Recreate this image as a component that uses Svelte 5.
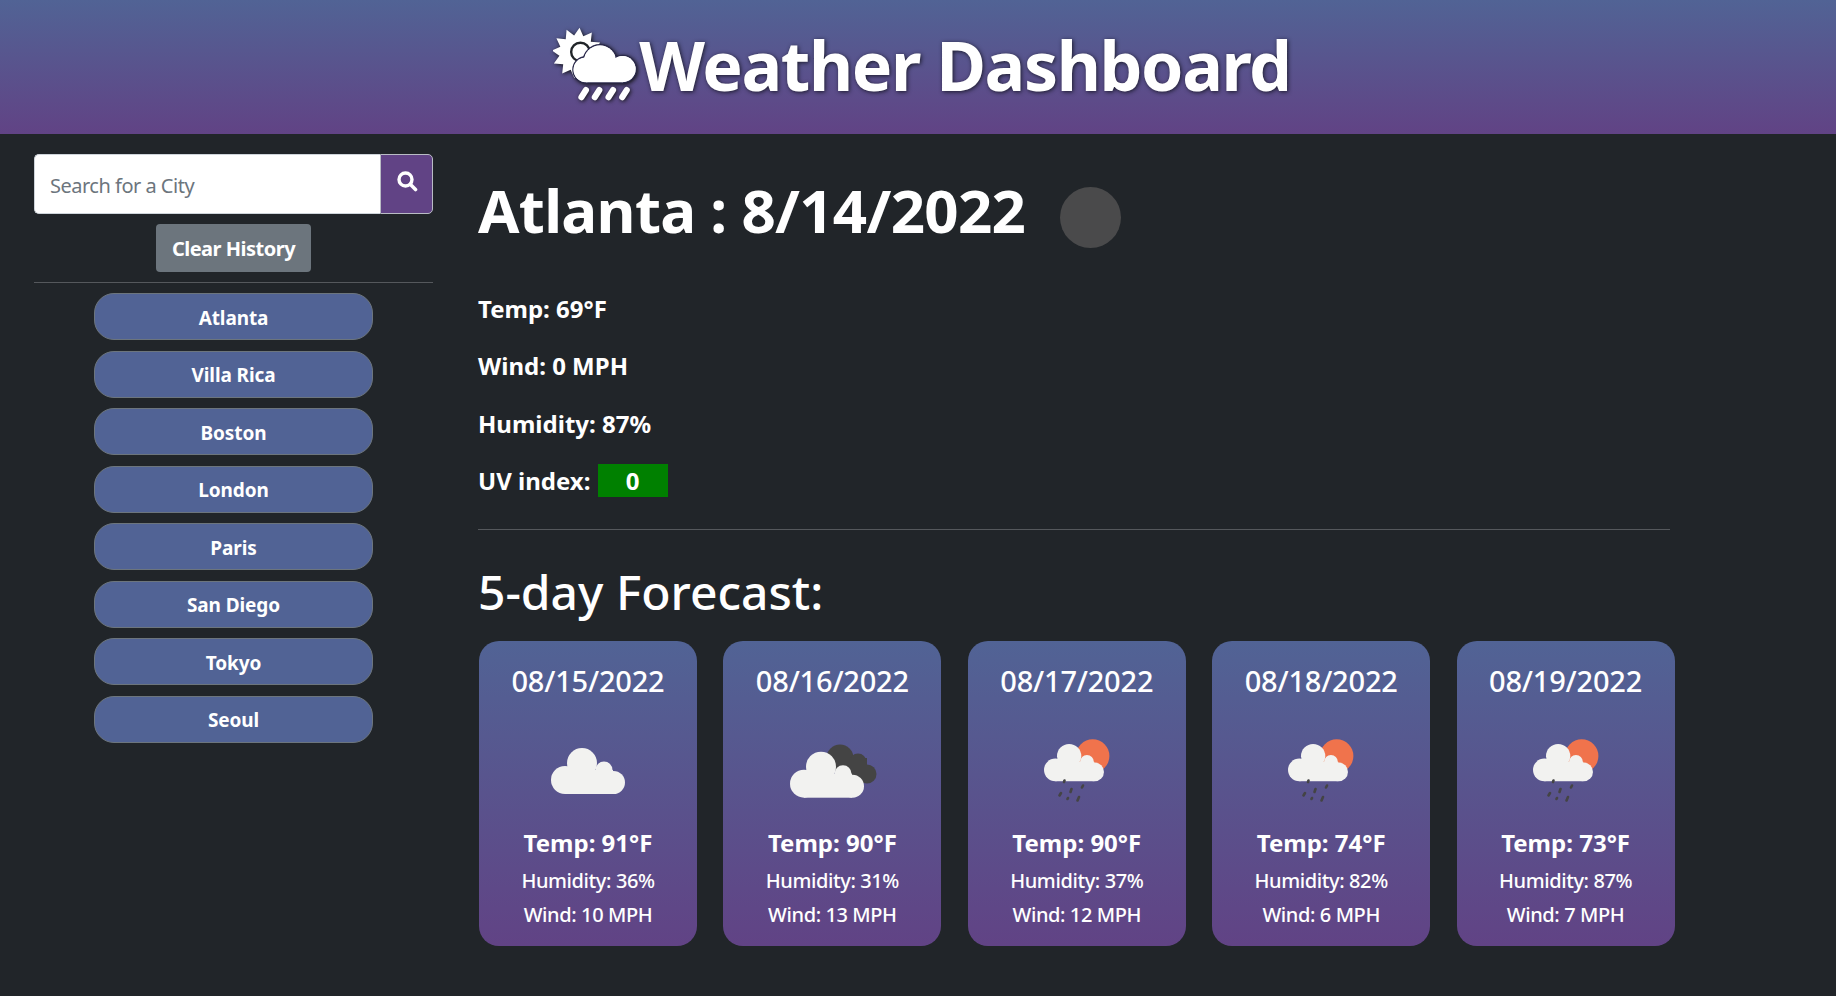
<script>
	const cities = ['Atlanta', 'Villa Rica', 'Boston', 'London', 'Paris', 'San Diego', 'Tokyo', 'Seoul'];

	const forecast = [
		{ date: '08/15/2022', icon: 'cloud', temp: 91, humidity: 36, wind: 10 },
		{ date: '08/16/2022', icon: 'broken', temp: 90, humidity: 31, wind: 13 },
		{ date: '08/17/2022', icon: 'rain', temp: 90, humidity: 37, wind: 12 },
		{ date: '08/18/2022', icon: 'rain', temp: 74, humidity: 82, wind: 6 },
		{ date: '08/19/2022', icon: 'rain', temp: 73, humidity: 87, wind: 7 }
	];

	// spiky sun for the header logo
	const sunPoints = Array.from({ length: 24 }, (_, i) => {
		const r = i % 2 ? 52 : 74;
		const a = (i * Math.PI) / 12 + 0.1;
		return `${70 + r * Math.cos(a)},${75 + r * Math.sin(a)}`;
	}).join(' ');
</script>

{#snippet cloud(fill)}
	<g {fill}>
		<circle cx="27" cy="60" r="14" />
		<circle cx="44" cy="43" r="15" />
		<circle cx="66" cy="50" r="8.5" />
		<circle cx="75.5" cy="62.5" r="11.5" />
		<rect x="27" y="50" width="48" height="24" />
	</g>
{/snippet}

{#snippet weatherIcon(kind)}
	<svg class="icon" viewBox="0 0 100 100" aria-hidden="true">
		{#if kind === 'cloud'}
			{@render cloud('#f2f2f0')}
		{:else if kind === 'broken'}
			<g fill="#444">
				<circle cx="58" cy="38" r="13.5" />
				<circle cx="76" cy="42" r="8.5" />
				<circle cx="85" cy="54" r="9.5" />
				<rect x="58" y="38" width="27" height="25" />
			</g>
			<g transform="translate(-5 3.7)">{@render cloud('#f2f2f0')}</g>
		{:else}
			<circle cx="65.7" cy="36" r="16.7" fill="#f0734c" />
			<g transform="translate(6.5 1.3) scale(0.81)">{@render cloud('#f2f2f0')}</g>
			<g stroke="#444" stroke-width="2.6" stroke-linecap="round">
				<line x1="37.5" y1="60.5" x2="37" y2="62" />
				<line x1="34" y1="73" x2="32.5" y2="75.5" />
				<line x1="44.5" y1="69" x2="43.5" y2="72" />
				<line x1="56" y1="65.5" x2="55" y2="67.5" />
				<line x1="41" y1="78" x2="40.5" y2="79" />
				<line x1="52" y1="77" x2="50.5" y2="80.5" />
			</g>
		{/if}
	</svg>
{/snippet}

<header class="top">
	<svg class="logo" viewBox="0 0 245 220" aria-hidden="true">
		<polygon points={sunPoints} fill="#fff" />
		<circle cx="80" cy="72" r="27" fill="#fff" stroke="#212529" stroke-width="7" />
		<g fill="#fff" stroke="#2b2a4c" stroke-width="8" paint-order="stroke">
			<circle cx="96" cy="124" r="36" />
			<circle cx="137" cy="100" r="47" />
			<circle cx="203" cy="122" r="38" />
			<rect x="96" y="110" width="107" height="50" />
		</g>
		<g fill="#fff">
			<circle cx="96" cy="124" r="36" />
			<circle cx="137" cy="100" r="47" />
			<circle cx="203" cy="122" r="38" />
			<rect x="96" y="110" width="107" height="50" />
		</g>
		<g stroke="#fff" stroke-width="18" stroke-linecap="round">
			<line x1="83" y1="204" x2="96" y2="183" />
			<line x1="122" y1="204" x2="135" y2="183" />
			<line x1="162" y1="204" x2="175" y2="183" />
			<line x1="202" y1="204" x2="215" y2="183" />
		</g>
	</svg>
	<h1>Weather Dashboard</h1>
</header>

<div class="page">
	<aside class="sidebar">
		<form class="search" on:submit|preventDefault>
			<input type="text" placeholder="Search for a City" />
			<button type="submit" aria-label="Search">
				<svg viewBox="0 0 22 22" width="22" height="22" aria-hidden="true">
					<circle cx="9.5" cy="9.5" r="6.5" fill="none" stroke="#fff" stroke-width="3.4" />
					<line x1="14.5" y1="14.5" x2="19.5" y2="19.5" stroke="#fff" stroke-width="3.6" stroke-linecap="round" />
				</svg>
			</button>
		</form>
		<button class="clear" type="button">Clear History</button>
		<hr />
		<div class="history">
			{#each cities as city}
				<button class="city" type="button">{city}</button>
			{/each}
		</div>
	</aside>

	<main class="content">
		<div class="today">
			<h2>Atlanta : 8/14/2022</h2>
			<span class="today-icon"></span>
		</div>
		<p class="stat">Temp: 69°F</p>
		<p class="stat">Wind: 0 MPH</p>
		<p class="stat">Humidity: 87%</p>
		<p class="stat">UV index: <span class="uv">0</span></p>
		<hr />
		<h3>5-day Forecast:</h3>
		<div class="cards">
			{#each forecast as day}
				<article class="card">
					<div class="date">{day.date}</div>
					{@render weatherIcon(day.icon)}
					<div class="temp">Temp: {day.temp}°F</div>
					<div class="small">Humidity: {day.humidity}%</div>
					<div class="small">Wind: {day.wind} MPH</div>
				</article>
			{/each}
		</div>
	</main>
</div>

<style>
	:global(body) {
		background: #212529;
		color: #fff;
		font-family: 'Noto Sans', 'Open Sans', sans-serif;
	}

	.top {
		height: 134px;
		display: flex;
		align-items: center;
		justify-content: center;
		gap: 2px;
		padding-left: 8px;
		background: linear-gradient(#516395, #614385);
	}

	.logo {
		width: 84px;
		height: 76px;
		margin-top: -4px;
		filter: drop-shadow(1px 1px 2px #111);
	}

	.top h1 {
		margin: -5px 0 0;
		font-size: 68px;
		font-weight: 700;
		letter-spacing: -1.4px;
		text-shadow: 1px 1px 4px #1a1a2a;
	}

	.page {
		display: flex;
	}

	.sidebar {
		width: 399px;
		margin-left: 34px;
		padding-top: 20px;
		display: flex;
		flex-direction: column;
		align-items: center;
	}

	.search {
		display: flex;
		width: 100%;
		height: 60px;
		margin: 0;
	}

	.search input {
		flex: 1;
		min-width: 0;
		box-sizing: border-box;
		padding: 2px 15px 0;
		border: 1px solid #ced4da;
		border-right: none;
		border-radius: 5px 0 0 5px;
		font: 20px 'Noto Sans', sans-serif;
		letter-spacing: -0.5px;
	}

	.search input::placeholder {
		color: #6c757d;
	}

	.search button {
		width: 53px;
		border: 1px solid #b9bcc4;
		border-radius: 0 5px 5px 0;
		background: #614385;
		display: flex;
		align-items: center;
		justify-content: center;
		padding: 0 0 6px;
	}

	.clear {
		margin-top: 10px;
		width: 155px;
		height: 48px;
		border: none;
		border-radius: 4px;
		background: #6c757d;
		color: #fff;
		font: 700 20px 'Noto Sans', sans-serif;
		letter-spacing: -0.5px;
	}

	.sidebar hr {
		width: 100%;
		margin: 10px 0 0;
		border: none;
		border-top: 1px solid #55585c;
	}

	.history {
		margin-top: 10px;
		display: flex;
		flex-direction: column;
		gap: 10.5px;
	}

	.city {
		width: 279px;
		height: 47px;
		padding-top: 3px;
		border: 1px solid #6c757d;
		border-radius: 20px;
		background: #516395;
		color: #fff;
		font: 700 19px 'Noto Sans', sans-serif;
		letter-spacing: -0.1px;
	}

	.content {
		width: 1197px;
		margin-left: 45px;
		padding-top: 33px;
	}

	.today {
		display: flex;
		align-items: center;
		height: 86px;
	}

	.today h2 {
		margin: 0;
		font-size: 60px;
		font-weight: 700;
		letter-spacing: -0.7px;
		line-height: 1;
	}

	.today-icon {
		width: 61px;
		height: 61px;
		margin: 14px 0 0 35px;
		border-radius: 50%;
		background: #4a4a4b;
	}

	.stat {
		margin: 0 0 24px;
		height: 33.5px;
		line-height: 33.5px;
		font-size: 24px;
		font-weight: 700;
		letter-spacing: 0;
	}

	.stat:first-of-type {
		margin-top: 38.5px;
	}

	.stat:last-of-type {
		margin-bottom: 0;
	}

	.uv {
		display: inline-block;
		width: 70px;
		height: 33px;
		margin-left: 1px;
		background: #008000;
		text-align: center;
		vertical-align: top;
	}

	.content hr {
		width: 1192px;
		margin: 31px 0 0;
		border: none;
		border-top: 1px solid #55585c;
	}

	.content h3 {
		margin: 33px 0 0;
		font-size: 48px;
		font-weight: 500;
		letter-spacing: 0;
		line-height: 58px;
	}

	.cards {
		display: flex;
		gap: 26.4px;
		margin: 20px 0 0 1px;
	}

	.card {
		width: 218px;
		height: 305px;
		box-sizing: border-box;
		padding-top: 21px;
		border-radius: 20px;
		background: linear-gradient(#516395, #614385);
		display: flex;
		flex-direction: column;
		align-items: center;
	}

	.date {
		font-size: 29px;
		line-height: 38px;
		letter-spacing: -0.2px;
		font-weight: 500;
	}

	.icon {
		width: 100px;
		height: 100px;
		margin-top: 20px;
		flex: none;
	}

	.temp {
		margin-top: 7px;
		font-size: 24px;
		font-weight: 700;
		line-height: 32px;
		letter-spacing: 0;
	}

	.small {
		margin-top: 6px;
		font-size: 20px;
		font-weight: 500;
		line-height: 28px;
		letter-spacing: -0.4px;
	}

	.temp + .small {
		margin-top: 8px;
	}
</style>
